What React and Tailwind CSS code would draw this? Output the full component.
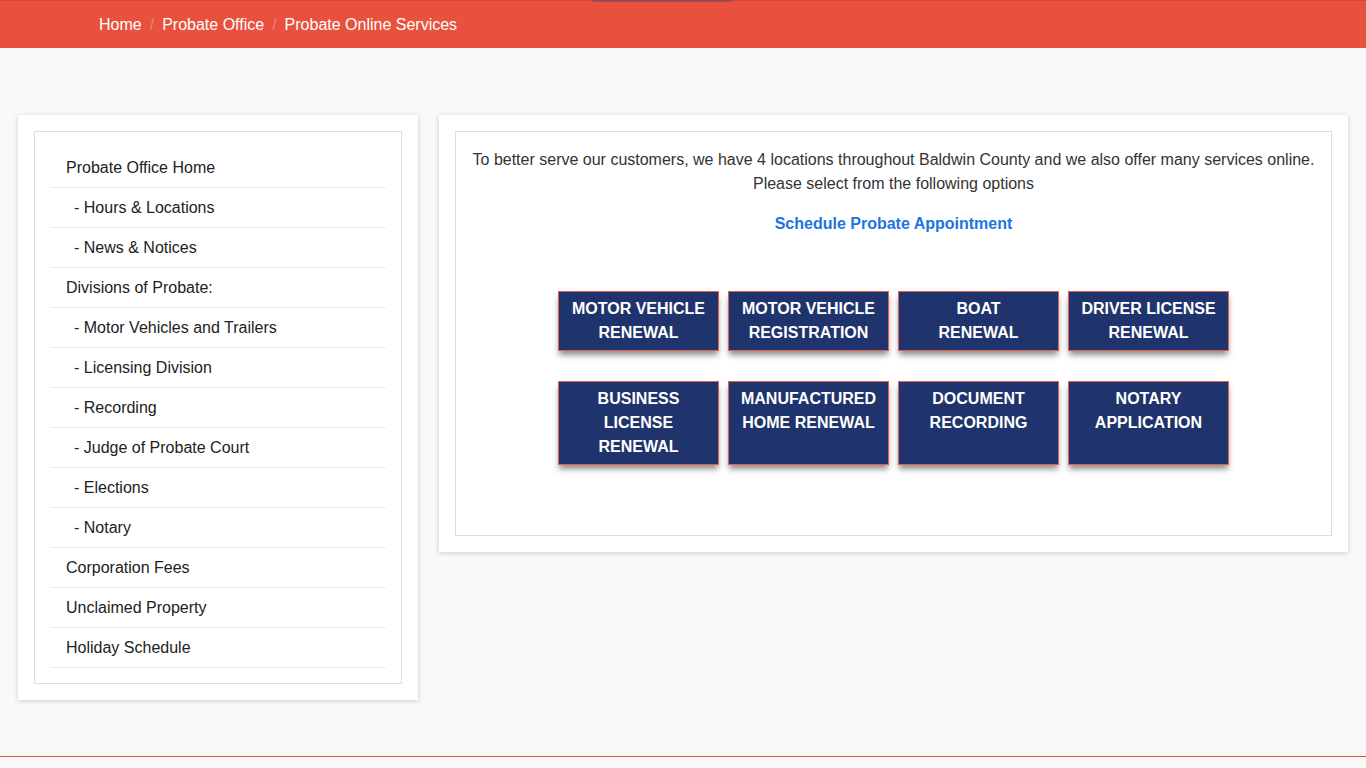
const menu = [
  { label: "Probate Office Home" },
  { label: "- Hours & Locations", sub: true },
  { label: "- News & Notices", sub: true },
  { label: "Divisions of Probate:" },
  { label: "- Motor Vehicles and Trailers", sub: true },
  { label: "- Licensing Division", sub: true },
  { label: "- Recording", sub: true },
  { label: "- Judge of Probate Court", sub: true },
  { label: "- Elections", sub: true },
  { label: "- Notary", sub: true },
  { label: "Corporation Fees" },
  { label: "Unclaimed Property" },
  { label: "Holiday Schedule" },
];

const services = [
  ["MOTOR VEHICLE", "RENEWAL"],
  ["MOTOR VEHICLE", "REGISTRATION"],
  ["BOAT", "RENEWAL"],
  ["DRIVER LICENSE", "RENEWAL"],
  ["BUSINESS", "LICENSE", "RENEWAL"],
  ["MANUFACTURED", "HOME RENEWAL"],
  ["DOCUMENT", "RECORDING"],
  ["NOTARY", "APPLICATION"],
];

function ServiceButton({ lines }) {
  return (
    <a
      href="#"
      className="block border border-[#e2604f] bg-[#1f346c] px-2 py-[5px] text-center text-[16px] font-bold leading-6 text-white shadow-[0_5px_6px_-1px_rgba(0,0,0,0.45)]"
    >
      {lines.map((l) => (
        <span key={l} className="block">
          {l}
        </span>
      ))}
    </a>
  );
}

export default function App() {
  return (
    <div className="min-h-screen bg-[#f9f9f9] font-['Liberation_Sans',Arial,sans-serif]">
      <header className="relative h-12 border-t border-[#c94a3a] bg-[#e8513e]">
        <div className="absolute left-[592px] top-[-1px] h-[2px] w-[140px] rounded-b-full bg-[#7a4468] opacity-60" />
        <nav className="flex h-full items-center pl-[99px] text-[16px] text-white">
          <a href="#">Home</a>
          <span className="px-2 text-white/30">/</span>
          <a href="#">Probate Office</a>
          <span className="px-2 text-white/30">/</span>
          <span>Probate Online Services</span>
        </nav>
      </header>

      <main className="flex items-start gap-[21px] px-[18px] pt-[67px]">
        <aside className="w-[400px] shrink-0 bg-white p-4 shadow-[0_1px_5px_rgba(0,0,0,0.18)]">
          <div className="border border-[#dcdcdc] px-[15px] pb-[15px] pt-4">
            <ul>
              {menu.map((m) => (
                <li
                  key={m.label}
                  className={`flex h-10 items-center border-b border-[#ececec] text-[16px] text-[#222] ${
                    m.sub ? "pl-6" : "pl-4"
                  }`}
                >
                  <a href="#">{m.label}</a>
                </li>
              ))}
            </ul>
          </div>
        </aside>

        <section className="flex-1 bg-white p-4 shadow-[0_1px_5px_rgba(0,0,0,0.18)]">
          <div className="border border-[#dcdcdc] px-4 pb-[70px] pt-4 text-center">
            <p className="text-[16px] leading-6 text-[#333]">
              To better serve our customers, we have 4 locations throughout Baldwin County and we also offer many
              services online.
              <br />
              Please select from the following options
            </p>
            <a href="#" className="mt-4 inline-block text-[16px] font-bold leading-6 text-[#1b74e0]">
              Schedule Probate Appointment
            </a>
            <div className="mx-auto mt-[55px] grid w-[671px] grid-cols-4 gap-x-[9px] gap-y-[30px]">
              {services.map((s) => (
                <ServiceButton key={s.join(" ")} lines={s} />
              ))}
            </div>
          </div>
        </section>
      </main>

      <footer className="mt-14">
        <div className="h-px bg-[#e8513e]" />
        <div className="h-2" />
      </footer>
    </div>
  );
}
